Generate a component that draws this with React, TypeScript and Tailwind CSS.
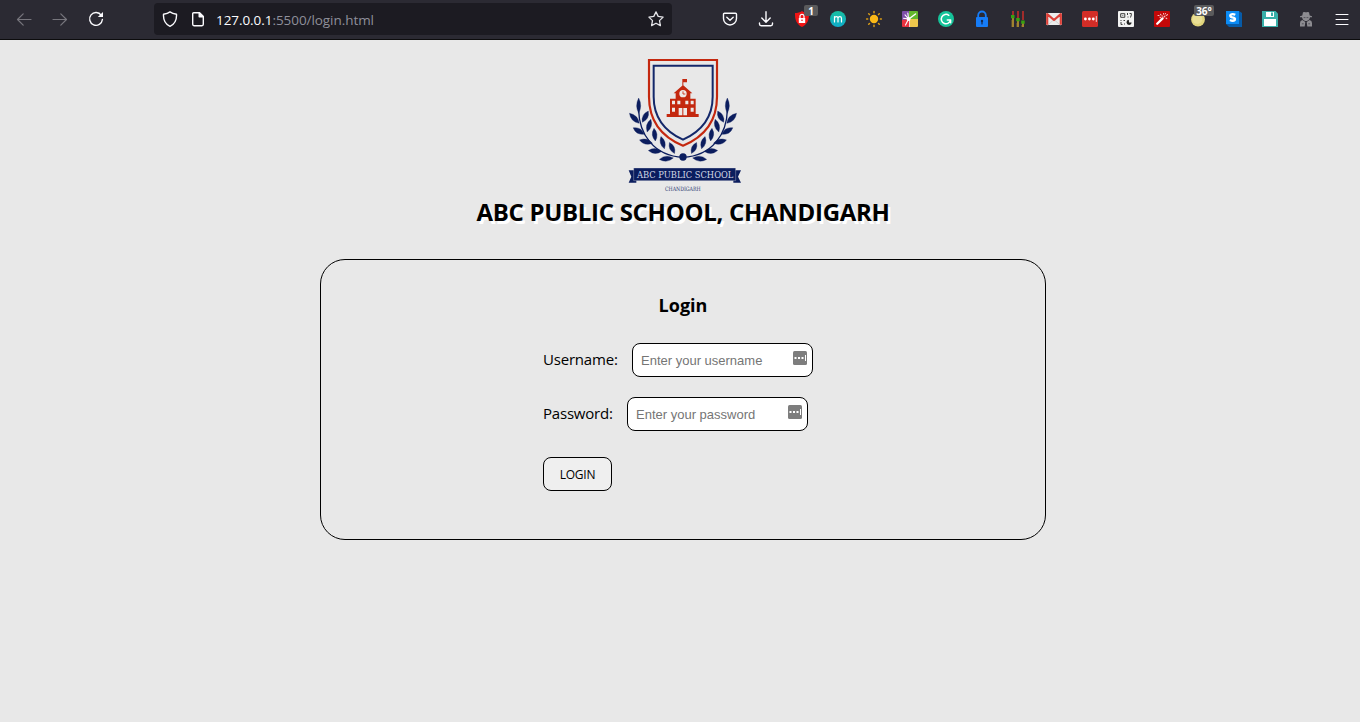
import React from "react";

const leaves: [number, number, number, number, number][] = [
  [71, 167, 90, 23, 12],
  [58, 205, 46, 21, 15],
  [91, 200, -62, 19, 15],
  [71, 243, 30, 19, 15],
  [102, 227, -74, 20, 14],
  [93, 275, 14, 20, 15],
  [119, 254, 84, 19, 14],
  [120, 303, 4, 20, 15],
  [143, 278, 74, 19, 14],
  [154, 326, -6, 21, 15],
  [171, 294, 65, 18, 14],
];

function Branch() {
  return (
    <g fill="#0b1d5e">
      <path d="M71 180C72 250 115 318 204 322" fill="none" stroke="#0b1d5e" strokeWidth="4" />
      {leaves.map(([x, y, a, r, w], i) => (
        <path
          key={i}
          transform={`translate(${x} ${y}) rotate(${a})`}
          d={`M${-r} 0Q0 ${-w} ${r} 0Q0 ${w} ${-r} 0Z`}
          stroke="#0b1d5e"
          strokeWidth="1"
        />
      ))}
    </g>
  );
}

function Crest() {
  return (
    <svg viewBox="-6 0 420 450" className="h-[150px] w-[140px]">
      <path d="M102 30H306V140C306 218 264 262 204 287C144 262 102 218 102 140Z" fill="none" stroke="#c4280f" strokeWidth="6.5" />
      <path d="M116 47H293V140C293 208 256 245 204 269C152 245 116 208 116 140Z" fill="none" stroke="#14286a" strokeWidth="6" />
      <g fill="#c4280f">
        <path d="M203 87h13v10h-11v12h-3V87zM204 105L232 130H226V146H242V192H251V201H155V192H165V146H182V130H176Z" />
      </g>
      <circle cx="204" cy="131" r="11" fill="#eee9e7" />
      <path d="M204 124v8h7" fill="none" stroke="#c4280f" strokeWidth="2.5" />
      <g fill="#eee9e7">
        <path d="M171 152h9v11h-9zM187 152h9v11h-9zM211 152h9v11h-9zM227 152h9v11h-9zM171 173h9v12h-9zM227 173h9v12h-9zM191 174h11v22h-11zM205 174h11v22h-11z" />
      </g>
      <Branch />
      <g transform="translate(408 0) scale(-1 1)">
        <Branch />
      </g>
      <circle cx="204" cy="321" r="11" fill="#0b1d5e" />
      <path d="M41 361H64V398H41L49 380ZM378 361H355V398H378L369 380Z" fill="#0b1d5e" />
      <path d="M56 354H362V392H56Z" fill="#0b1d5e" stroke="#e8e8e8" strokeWidth="1" />
      <text x="66" y="385" textLength="289" lengthAdjust="spacingAndGlyphs" fontFamily="DejaVu Serif, serif" fontSize="29" fill="#d4d9e6">ABC PUBLIC SCHOOL</text>
      <text x="150" y="423" textLength="107" lengthAdjust="spacingAndGlyphs" fontFamily="DejaVu Serif, serif" fontSize="18" fill="#26356f">CHANDIGARH</text>
    </svg>
  );
}

function Icon({ children }: { children: React.ReactNode }) {
  return (
    <div className="relative flex w-9 shrink-0 items-center justify-center">
      <svg viewBox="0 0 16 16" className="size-4 overflow-visible" fill="none" strokeLinecap="round" strokeLinejoin="round">
        {children}
      </svg>
    </div>
  );
}

function Badge({ text, children }: { text: string; children: React.ReactNode }) {
  return (
    <div className="relative flex">
      {children}
      <span
        className={
          "absolute top-[5px] flex h-[11px] items-center justify-center rounded-[2px] bg-[#5a5a5c] font-['Open_Sans',sans-serif] text-[10px] leading-none font-bold text-white " +
          (text === "1" ? "left-[20px] w-[14px]" : "left-[14px] w-[20px]")
        }
      >
        {text}
      </span>
    </div>
  );
}

function Toolbar() {
  return (
    <header className="flex h-10 shrink-0 border-b border-[#0c0c0d] bg-[#2b2a33] pb-px">
      <div className="flex w-[154px] pl-1.5">
        <Icon><path d="M15 8.5H1.5M7.2 2.8L1.5 8.5L7.2 14.2" stroke="#77767d" strokeWidth="1.2" /></Icon>
        <Icon><path d="M1 8.5H14.5M8.8 2.8L14.5 8.5L8.8 14.2" stroke="#77767d" strokeWidth="1.2" /></Icon>
        <Icon>
          <path d="M13.3 4.3A6.4 6.4 0 1 0 14.4 8.5" stroke="#fbfbfe" strokeWidth="1.4" />
          <path d="M15 1V6H9.8Z" fill="#fbfbfe" />
        </Icon>
      </div>
      <div className="mt-[3px] flex h-8 w-[518px] items-center rounded bg-[#1c1b22] pr-2 pl-2">
        <svg viewBox="0 0 16 16" className="size-4" fill="none" stroke="#fbfbfe" strokeWidth="1.4" strokeLinejoin="round">
          <path d="M8 .9C6.3 2.2 3.6 3 1.5 3.3C1.2 8.4 3.2 13 8 15.3C12.8 13 14.8 8.4 14.5 3.3C12.4 3 9.7 2.2 8 .9Z" />
        </svg>
        <svg viewBox="0 0 16 16" className="ml-3 size-4" fill="none" stroke="#fbfbfe" strokeWidth="1.4" strokeLinejoin="round">
          <path d="M3.7 1.7H9.5L13.3 5.5V13.3Q13.3 14.7 12 14.7H4Q2.7 14.7 2.7 13.3V2.7Q2.7 1.7 3.7 1.7Z" />
          <path d="M9.2 1.7V5.8H13.3Z" fill="#fbfbfe" />
        </svg>
        <span className="ml-2.5 pt-0.5 font-['Open_Sans',sans-serif] text-[13.5px] leading-5 tracking-[-0.06px] text-[#8f8f9a]">
          <span className="text-[#fbfbfe]">127.0.0.1</span>:5500/login.html
        </span>
        <svg viewBox="0 0 16 16" className="ml-auto size-4" fill="none" stroke="#e4e4e8" strokeWidth="1.3" strokeLinejoin="round">
          <path d="M8 .9L10.2 5.4L15.1 6.1L11.5 9.6L12.4 14.6L8 12.2L3.6 14.6L4.5 9.6L.9 6.1L5.8 5.4Z" />
        </svg>
      </div>
      <div className="ml-10 flex">
        <Icon>
          <path d="M2.5 2.2H13.5Q14.5 2.2 14.5 3.2V7.5A6.5 6.5 0 0 1 1.5 7.5V3.2Q1.5 2.2 2.5 2.2ZM4.8 6.3L8 9.3L11.2 6.3" stroke="#fbfbfe" strokeWidth="1.4" />
        </Icon>
        <Icon>
          <path d="M8 .8V11M3.8 7L8 11.2L12.2 7M1.5 12V13Q1.5 14.7 3.2 14.7H12.8Q14.5 14.7 14.5 13V12" stroke="#fbfbfe" strokeWidth="1.4" />
        </Icon>
        <Badge text="1">
          <Icon>
            <path d="M8 0C10 1.4 12.5 2 15 2C15.3 8.5 13.6 13.3 8 16C2.4 13.3 .7 8.5 1 2C3.5 2 6 1.4 8 0Z" fill="#f01414" />
            <path d="M4.8 7H11.2V12H4.8Z" fill="#fff" />
            <path d="M6 7V5.3A2 2 0 0 1 10 5.3V7" stroke="#fff" strokeWidth="1.2" />
            <circle cx="8" cy="9.3" r=".8" fill="#f01414" />
          </Icon>
        </Badge>
        <Icon>
          <circle cx="8" cy="8" r="8" fill="url(#teal)" />
          <defs><linearGradient id="teal" x1="0" y1="0" x2="0" y2="1"><stop stopColor="#19bfa0" /><stop offset="1" stopColor="#0faccb" /></linearGradient></defs>
          <path d="M4.5 11V5.7M4.5 7.4Q4.8 5.7 6.3 5.7Q8 5.7 8 7.4V11M8 7.4Q8.3 5.7 9.8 5.7Q11.5 5.7 11.5 7.4V11" stroke="#fff" strokeWidth="1.2" />
        </Icon>
        <Icon>
          <circle cx="8" cy="8" r="4.2" fill="#fbb917" />
          <path d="M8 .6V1.7M8 14.3V15.4M.6 8H1.7M14.3 8H15.4M2.7 2.7L3.5 3.5M12.5 12.5L13.3 13.3M2.7 13.3L3.5 12.5M12.5 3.5L13.3 2.7" stroke="#d99c16" strokeWidth="1.5" />
        </Icon>
        <Icon>
          <path d="M0 1Q0 0 1 0H8V9H0Z" fill="#7d4fa8" />
          <path d="M7 0H15Q16 0 16 1V8H7Z" fill="#63b72c" />
          <path d="M8 8H16V15Q16 16 15 16H7Z" fill="#edc64c" />
          <path d="M0 9L8 8V16H1Q0 16 0 15Z" fill="#e83340" />
          <path d="M6.6 8L3.5 14M6.6 8L1.5 7.2M6.6 8L3 3.8M6.6 8L5.8 2" stroke="#fff" strokeWidth="1.1" />
          <path d="M7.5 7.5L13.5 3" stroke="#fff" strokeWidth="1.5" />
          <path d="M7.5 8V16" stroke="#f6e4d8" strokeWidth=".9" strokeLinecap="butt" />
          <circle cx="6.6" cy="8" r="1.9" fill="#fff" />
        </Icon>
        <Icon>
          <circle cx="8" cy="8" r="8" fill="#15c39a" />
          <path d="M10.8 4.3A4.7 4.7 0 1 0 12.6 9H9.3M12.6 9V11.7" stroke="#fff" strokeWidth="1.5" />
        </Icon>
        <Icon>
          <path d="M4.2 7V4.3A3.8 3.8 0 0 1 11.8 4.3V7" stroke="#167cf7" strokeWidth="1.8" />
          <rect x="2" y="6" width="12" height="10" rx="1" fill="#167cf7" />
          <circle cx="8" cy="10" r="1.2" fill="#172b50" />
          <path d="M8 10V13" stroke="#172b50" strokeWidth="1.2" />
        </Icon>
        <Icon>
          <path d="M3 0V4M8 0V7M13 0V9" stroke="#e02f28" strokeWidth="1.3" strokeLinecap="butt" />
          <path d="M3 7V16M8 10V16M13 12V16" stroke="#e0b42e" strokeWidth="1.3" strokeLinecap="butt" />
          <path d="M1.5 9V16M6.5 12V16M11.5 14V16" stroke="#6b5a2c" strokeWidth=".7" strokeLinecap="butt" />
          <path d="M1 4H4.5V7.2H1ZM6.2 7H9.7V10.2H6.2ZM11.2 9.5H14.7V12.7H11.2Z" fill="#38a210" />
        </Icon>
        <Icon>
          <rect x="0" y="2" width="16" height="12" rx="1" fill="#ececec" />
          <path d="M2 14L8 8.5L14 14" stroke="#c9c9c9" strokeWidth=".8" />
          <path d="M1.2 13.7V3.1L8 9L14.8 3.1V13.7" stroke="#dc4038" strokeWidth="2.2" strokeLinecap="butt" />
        </Icon>
        <Icon>
          <rect width="16" height="16" rx="1.5" fill="#d32d27" />
          <circle cx="3.4" cy="8" r="1.4" fill="#fff" /><circle cx="7.4" cy="8" r="1.4" fill="#fff" /><circle cx="11.3" cy="8" r="1.4" fill="#fff" />
          <path d="M14.3 5.5V10.5" stroke="#fff" strokeWidth=".8" />
        </Icon>
        <Icon>
          <rect width="16" height="16" rx="1" fill="#f2f2f2" />
          <path d="M2.7 2.7H6.8V6.3H2.7ZM9.5 2V4M9.5 6H10.5M11.5 2.5H13.3V4L12.5 6.5M2.5 9.5H3.5M5.5 9.5H7M3 11V13.5H4.5M6.5 12.5V13.5" stroke="#3c3c3c" strokeWidth="1" strokeLinecap="butt" strokeLinejoin="miter" />
          <path d="M4.3 4.2H5.3V5H4.3Z" fill="#444" />
          <path d="M10.8 8.8A2.6 2.6 0 1 0 13.7 11.5H11Z" fill="#222" />
        </Icon>
        <Icon>
          <rect width="16" height="16" rx="1" fill="#c40808" />
          <path d="M3.2 12.8L8.6 7.4" stroke="#fff" strokeWidth="2.3" />
          <path d="M10 6L11 5M4 4.5H5M6.5 3.3L7 4M9.5 2.5L9.8 3.2M12.6 4.4L13.5 3.6M12 7L12.8 7.6M6 6.2L6.6 6.6M8 5H8.6M11.5 2.5V2.8" stroke="#f5c6c6" strokeWidth="1.1" />
        </Icon>
        <Badge text="36°">
          <Icon>
            <circle cx="8" cy="8.5" r="6.9" fill="#e0d47c" />
            <circle cx="7.3" cy="8" r="5" fill="#e9df95" />
          </Icon>
        </Badge>
        <Icon>
          <path d="M0 0H13L16 2V16H3L0 13Z" fill="#075ba8" />
          <path d="M0 0H13V13H0Z" fill="#0b8bf5" />
          <path d="M9.3 3.8Q6.6 2.6 4.6 3.7Q3.5 5.5 6.3 6.4Q9.8 7 8.8 9Q7 10.5 3.9 9" stroke="#fff" strokeWidth="2.3" strokeLinecap="butt" />
        </Icon>
        <Icon>
          <path d="M0 0H13.5L16 2.5V16H0Z" fill="#38afa9" />
          <path d="M4 1H12V6H4ZM2 8H14V15H2Z" fill="#fff" />
          <path d="M9 1.5H11V5H9Z" fill="#38afa9" />
        </Icon>
        <Icon>
          <path d="M4.3 4.6L5 1.2L7 1L8 1.6L9 1L11 1.2L11.7 4.6L14 5.2V6.2H12L11.2 8.5L9 10H7L4.8 8.5L4 6.2H2V5.2Z" fill="#8d8c91" />
          <path d="M4.5 9L7.3 11L6.7 15.4H2V12Q2 9.5 4.5 9ZM11.5 9L8.7 11L9.3 15.4H14V12Q14 9.5 11.5 9Z" fill="#8d8c91" />
          <path d="M6 6.6H7.1M8.9 6.6H10M4.3 12.8H5.3M10.7 12.8H11.7" stroke="#45444c" strokeWidth=".8" />
        </Icon>
        <Icon><path d="M2 3.5H14M2 8.5H14M2 13.5H14" stroke="#fbfbfe" strokeWidth="1.1" /></Icon>
      </div>
    </header>
  );
}

function Field({ label, placeholder, width }: { label: string; placeholder: string; width: string }) {
  return (
    <div className="flex h-[34px] items-center">
      <label className={"pb-0.5 font-['Open_Sans',sans-serif] text-[15px] leading-5 tracking-[-0.2px] whitespace-nowrap text-black " + width}>{label}</label>
      <div className="flex h-[34px] w-[181px] items-center rounded-lg border border-black bg-white pr-[5px] pl-2">
        <input
          placeholder={placeholder}
          className="w-[150px] min-w-0 bg-transparent pt-px font-['Liberation_Sans',sans-serif] text-[13px] leading-4 outline-none placeholder:text-[#757575]"
        />
        <svg viewBox="0 0 14 14" className="mb-1 ml-auto size-3.5 shrink-0">
          <rect width="14" height="14" rx="1.5" fill="#7d7d7d" />
          <path d="M1.5 6h2v2h-2zM5 6h2v2H5zM8.5 6h2v2h-2zM12 4h1v6h-1z" fill="#fff" />
        </svg>
      </div>
    </div>
  );
}

export default function App() {
  return (
    <div className="flex h-[722px] w-[1360px] flex-col overflow-hidden bg-[#e8e8e8]">
      <Toolbar />
      <main className="flex flex-col items-center pt-2.5 pl-1.5 text-black">
        <Crest />
        <h1 className="-mt-1 h-8 font-['Open_Sans',sans-serif] text-[24px] leading-8 font-bold tracking-[-0.3px] whitespace-nowrap [text-shadow:2.5px_2.5px_0_#fff]">
          ABC PUBLIC SCHOOL, CHANDIGARH
        </h1>
        <section className="mt-[31px] flex h-[281px] w-[726px] flex-col items-center rounded-[25px] border border-black pt-[33px]">
          <h2 className="h-6 font-['Open_Sans',sans-serif] text-[18px] leading-6 font-bold">Login</h2>
          <form className="mt-[26px] flex w-[280px] flex-col items-start gap-5" onSubmit={(e) => e.preventDefault()}>
            <Field label="Username:" placeholder="Enter your username" width="w-[89px]" />
            <Field label="Password:" placeholder="Enter your password" width="w-[84px]" />
            <button className="mt-1.5 h-[34px] w-[69px] rounded-lg border border-black bg-[#efefef] pt-0.5 font-['Open_Sans',sans-serif] text-[12px] tracking-[-0.2px]">
              LOGIN
            </button>
          </form>
        </section>
      </main>
    </div>
  );
}
